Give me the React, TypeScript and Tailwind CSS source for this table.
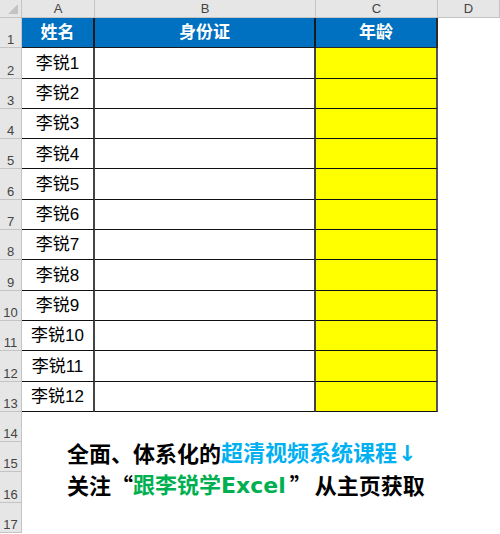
const names = Array.from({ length: 12 }, (_, i) => `李锐${i + 1}`);

function RowHeader({ n }: { n: number }) {
  return (
    <div className="flex items-end justify-center bg-[#e6e6e6] border-r border-b border-[#c4c4c4] pb-[1px] text-[13px] leading-none text-[#444]">
      {n}
    </div>
  );
}

export default function App() {
  return (
    <div
      className="w-[500px] h-[534px] overflow-hidden bg-white"
      style={{ fontFamily: '"Liberation Sans", "Noto Sans CJK SC", sans-serif' }}
    >
      <div className="grid grid-cols-[22px_73px_221px_122px_62px] grid-rows-[18px_repeat(17,30.3px)]">
        {/* column headers */}
        <div className="relative bg-[#e6e6e6] border-r border-b border-[#c4c4c4]">
          <svg className="absolute right-[3px] bottom-[3px]" width="10" height="10" viewBox="0 0 10 10">
            <polygon points="10,0 10,10 0,10" fill="#c3c3c3" />
          </svg>
        </div>
        {["A", "B", "C", "D"].map((c) => (
          <div
            key={c}
            className="flex items-center justify-center bg-[#e6e6e6] border-r border-b border-[#c4c4c4] text-[13px] leading-none text-[#444]"
          >
            {c}
          </div>
        ))}

        {/* row 1 - table header */}
        <RowHeader n={1} />
        <div className="flex items-center justify-center bg-[#0070c0] border-b border-r-2 border-[#1a1a1a] text-[17px] font-bold text-white">
          姓名
        </div>
        <div className="flex items-center justify-center bg-[#0070c0] border-b border-r-2 border-[#1a1a1a] text-[17px] font-bold text-white">
          身份证
        </div>
        <div className="flex items-center justify-center bg-[#0070c0] border-b border-r-2 border-[#2a2a2a] text-[17px] font-bold text-white">
          年龄
        </div>
        <div className="bg-white" />

        {/* data rows */}
        {names.map((name, i) => (
          <div key={name} className="contents">
            <RowHeader n={i + 2} />
            <div className="flex items-center justify-center border-b border-b-[#111] border-r-2 border-r-[#444] pt-[1px] text-[17px] text-black">
              {name}
            </div>
            <div className="border-b border-b-[#111] border-r-2 border-r-[#444] bg-white" />
            <div className="border-b border-b-[#111] border-r-2 border-r-[#555] bg-[#ffff00]" />
            <div className="bg-white" />
          </div>
        ))}

        {/* rows 14-17 */}
        <RowHeader n={14} />
        <div className="col-span-4 bg-white" />

        <RowHeader n={15} />
        <div
          className="col-span-4 flex items-center pl-[45px] pb-[10px] text-[22px] font-bold leading-none text-black whitespace-nowrap"
          style={{ fontFamily: '"Noto Sans CJK SC", sans-serif' }}
        >
          全面、体系化的
          <span className="text-[#00b0f0]">
            超清视频系统课程
            <span className="ml-[1px]" style={{ fontFamily: '"DejaVu Sans", sans-serif' }}>↓</span>
          </span>
        </div>

        <RowHeader n={16} />
        <div
          className="col-span-4 flex items-center pl-[45px] pb-[7px] text-[22px] font-bold leading-none text-black whitespace-nowrap"
          style={{ fontFamily: '"Noto Sans CJK SC", sans-serif' }}
        >
          关注“
          <span className="text-[#00b050]">
            跟李锐学
            <span style={{ fontFamily: '"DejaVu Sans", sans-serif' }}>Excel</span>
          </span>
          <span className="ml-[4px]">”</span>
          <span className="ml-[3px]">从主页获取</span>
        </div>

        <RowHeader n={17} />
        <div className="col-span-4 bg-white" />
      </div>
    </div>
  );
}
